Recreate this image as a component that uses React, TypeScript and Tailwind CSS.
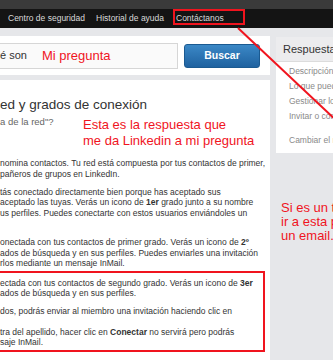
import React from 'react';

const RED = 'text-[#f0141e]';

function Line({ children }: { children?: React.ReactNode }) {
  return <div className="h-[10.5px] whitespace-nowrap">{children}</div>;
}

const sideLinks = [
  { label: 'Descripción general de la red', extra: '' },
  { label: 'Lo que puedes hacer con tu red', extra: '' },
  { label: 'Gestionar los contactos', extra: '' },
  { label: 'Invitar o conectar con alguien', extra: '' },
  { label: 'Cambiar el nombre', extra: 'mt-[9px]' },
];

export default function App() {
  return (
    <div className="relative w-[333px] h-[360px] overflow-hidden bg-[#e6e7ea] font-['Liberation_Sans',Arial,sans-serif]">
      {/* top strip + nav */}
      <div className="h-[9px] bg-[#3a3a3a]" />
      <nav className="h-[19px] bg-[#141414] flex items-start text-[8.5px] text-[#dadada]">
        <span className="w-[96px] pl-[8px] leading-[19px] whitespace-nowrap">Centro de seguridad</span>
        <span className="w-[77px] leading-[19px] whitespace-nowrap">Historial de ayuda</span>
        <span className="w-[72px] h-[16px] border-2 border-[#f0141e] pl-[1px] leading-[12px] pt-[1px] whitespace-nowrap">
          Contáctanos
        </span>
      </nav>

      <div className="flex gap-[6px]">
        {/* main column */}
        <div className="w-[270px] shrink-0">
          {/* search */}
          <div className="mt-[8px] h-[39px] bg-white flex items-center">
            <div className="w-[178px] h-[26px] bg-[#fafafa] border border-l-0 border-[#d6d6d6] flex items-center whitespace-nowrap">
              <span className="text-[11px] text-[#333]">é son</span>
              <span className={`ml-[15px] text-[13px] ${RED}`}>Mi pregunta</span>
            </div>
            <button className="ml-[6px] w-[76px] h-[24px] rounded-[3px] border border-[#1b5a91] bg-gradient-to-b from-[#3b88c6] to-[#1f62a0] text-white text-[10.5px] font-bold">
              Buscar
            </button>
          </div>

          {/* article */}
          <div className="mt-[5px] h-[290px] bg-white pt-[17px] text-[#333]">
            <h1 className="text-[13.5px] leading-[16px] whitespace-nowrap">ed y grados de conexión</h1>
            <div className="flex">
              <div className="w-[83px] mt-[3px] text-[9.5px] leading-[12px] text-[#666] whitespace-nowrap">a de la red"?</div>
              <div className={`mt-[4px] text-[13px] leading-[16px] ${RED} whitespace-nowrap`}>
                <div>Esta es la respuesta que</div>
                <div>me da Linkedin a mi pregunta</div>
              </div>
            </div>

            <div className="mt-[8px] text-[8.5px]">
              <div>
                <Line>nomina contactos. Tu red está compuesta por tus contactos de primer,</Line>
                <Line>pañeros de grupos en LinkedIn.</Line>
              </div>
              <div className="mt-[7.5px]">
                <Line>tás conectado directamente bien porque has aceptado sus</Line>
                <Line>
                  aceptado las tuyas. Verás un icono de <b>1er</b> grado junto a su nombre
                </Line>
                <Line>us perfiles. Puedes conectarte con estos usuarios enviándoles un</Line>
                <Line />
              </div>
              <div className="mt-[8.5px]">
                <Line>
                  onectada con tus contactos de primer grado. Verás un icono de <b>2º</b>
                </Line>
                <Line>ados de búsqueda y en sus perfiles. Puedes enviarles una invitación</Line>
                <Line>rlos mediante un mensaje InMail.</Line>
              </div>

              <div className="mt-[3px] w-[265px] border-y-2 border-r-2 border-[#f0141e] pt-[4px] pb-[3px]">
                <div>
                  <Line>
                    ectada con tus contactos de segundo grado. Verás un icono de <b>3er</b>
                  </Line>
                  <Line>ados de búsqueda y en sus perfiles.</Line>
                </div>
                <div className="mt-[7px]">
                  <Line>dos, podrás enviar al miembro una invitación haciendo clic en</Line>
                  <Line />
                  <Line>
                    tra del apellido, hacer clic en <b>Conectar</b> no servirá pero podrás
                  </Line>
                  <Line>saje InMail.</Line>
                </div>
              </div>
            </div>
          </div>
        </div>

        {/* side column */}
        <div className="flex-1 min-w-0">
          <div className="mt-[9px] w-[200px] bg-white">
            <div className="h-[25px] bg-[#ececee] border-b border-[#dcdcdc] pl-[7px] flex items-center text-[11px] text-[#333] whitespace-nowrap">
              Respuestas relacionadas
            </div>
            <div className="pt-[2px] pb-[4.5px] pl-[13px] text-[8.5px] text-[#8a8a8a]">
              {sideLinks.map((l) => (
                <div key={l.label} className={`leading-[15px] whitespace-nowrap ${l.extra}`}>
                  {l.label}
                </div>
              ))}
            </div>
          </div>

          <div className={`mt-[48px] pl-[5px] text-[13px] leading-[14px] ${RED} whitespace-nowrap`}>
            <div>Si es un tema privado puedes</div>
            <div>ir a esta página y enviarles</div>
            <div>un email.</div>
          </div>
        </div>
      </div>

      {/* annotation arrow */}
      <svg className="absolute inset-0 pointer-events-none" width="333" height="360" viewBox="0 0 333 360">
        <line x1="238" y1="28" x2="340" y2="124" stroke="#f0141e" strokeWidth="2" />
      </svg>
    </div>
  );
}
